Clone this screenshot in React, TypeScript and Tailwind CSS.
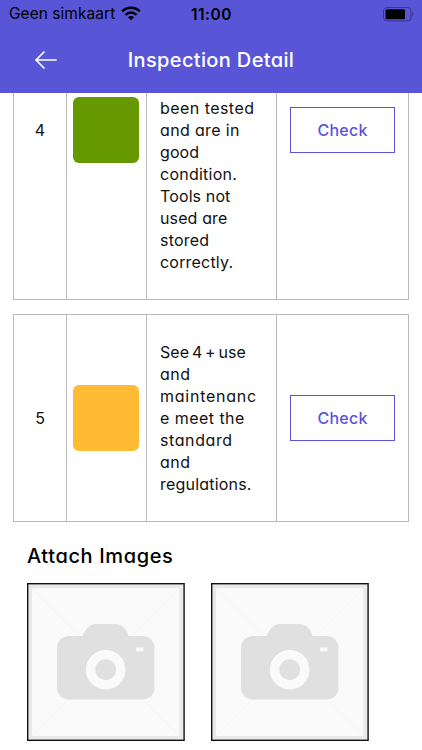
import React from 'react';

interface Line {
  text: string;
  className: string;
}

interface InspectionRowProps {
  score: number;
  swatch: string;
  lines: Line[];
  className: string;
  cellClass: string;
  textClass: string;
}

const goodLines: Line[] = [
  { text: 'been tested', className: 'tracking-[0.45px]' },
  { text: 'and are in', className: 'tracking-[0.35px]' },
  { text: 'good', className: 'tracking-[0.1px]' },
  { text: 'condition.', className: 'tracking-[0.25px]' },
  { text: 'Tools not', className: 'tracking-[0.12px]' },
  { text: 'used are', className: 'tracking-[0.12px]' },
  { text: 'stored', className: 'tracking-[0.2px]' },
  { text: 'correctly.', className: 'tracking-[0.2px]' },
];

const standardLines: Line[] = [
  { text: 'See 4 + use', className: 'tracking-[0.1px] [word-spacing:-1.9px]' },
  { text: 'and', className: 'tracking-[0.45px]' },
  { text: 'maintenanc', className: 'tracking-[0.75px]' },
  { text: 'e meet the', className: 'tracking-[0.45px]' },
  { text: 'standard', className: 'tracking-[0.6px]' },
  { text: 'and', className: 'tracking-[0.45px]' },
  { text: 'regulations.', className: 'tracking-[0.2px]' },
];

function StatusBar() {
  return (
    <div className="flex h-7 items-center justify-between pl-[9px] pr-[8px] text-black [font-feature-settings:normal]">
      <div className="flex w-[150px] items-center gap-[6px]">
        <span className="whitespace-nowrap text-[15.5px] leading-7 tracking-[0.04px]">Geen simkaart</span>
        <svg width="20" height="15" viewBox="0 0 20 15" fill="none" className="mt-[-1px] shrink-0">
          <path d="M1.2 5.4C6.2.5 13.8.5 18.8 5.4" stroke="currentColor" strokeWidth="2.7" />
          <path d="M4.5 8.8C7.7 5.800 12.3 5.800 15.5 8.8" stroke="currentColor" strokeWidth="2.5" />
          <path d="M10 14.3 6.9 11.2C8.7 9.6 11.3 9.6 13.1 11.2Z" fill="currentColor" />
        </svg>
      </div>
      <span className="mt-[1px] text-[15.5px] font-semibold leading-7 tracking-[0.5px]">11:00</span>
      <div className="flex w-[150px] justify-end">
        <svg width="32" height="16" viewBox="0 0 32 16" fill="none" className="mt-[-1px]">
          <rect x="1.500" y="1.500" width="27.500" height="13.500" rx="3.500" stroke="#36348c" />
          <rect x="3.500" y="3.300" width="19.500" height="9.900" rx="1.500" fill="#000" />
          <path d="M30.3 6v4.600c1.4-.6 1.4-4 0-4.600Z" fill="#36348c" />
        </svg>
      </div>
    </div>
  );
}

function Header() {
  return (
    <header className="h-[92.5px] shrink-0 bg-[#5856d6]">
      <StatusBar />
      <div className="grid h-16 grid-cols-[92px_1fr_92px] items-center">
        <button className="flex justify-center" aria-label="Back">
          <svg width="24" height="20" viewBox="0 0 24 20" fill="none" stroke="#fff" strokeWidth="1.7" strokeLinecap="round" strokeLinejoin="round">
            <path d="M22 10H2M10 2 2 10l8 8" />
          </svg>
        </button>
        <h1 className="whitespace-nowrap text-center text-[20px] font-medium tracking-[0.35px] text-white">Inspection Detail</h1>
      </div>
    </header>
  );
}

function InspectionRow({ score, swatch, lines, className, cellClass, textClass }: InspectionRowProps) {
  return (
    <section className={`mx-[13px] grid w-[396px] grid-cols-[53px_80px_130px_1fr] divide-x divide-[#b9b9b9] border border-[#b9b9b9] ${className}`}>
      <div className={`flex justify-center ${cellClass}`}>
        <span className="flex h-[66px] items-center text-[16px]">{score}</span>
      </div>
      <div className={`flex pl-[6px] ${cellClass}`}>
        <div className={`size-[66px] rounded-[6px] ${swatch}`} />
      </div>
      <div className={`pl-[13px] text-[16px] leading-[22.1px] ${textClass}`}>
        {lines.map((line, i) => (
          <p key={i} className={`whitespace-nowrap ${line.className}`}>{line.text}</p>
        ))}
      </div>
      <div className={`flex pl-[13px] ${cellClass}`}>
        <div className="flex h-[66px] items-center">
          <button className="h-[46px] w-[105px] border border-[#5856d6] text-[16px] font-medium tracking-[0.25px] text-[#5856d6]">Check</button>
        </div>
      </div>
    </section>
  );
}

function ImagePlaceholder() {
  return (
    <div className="size-[158px]">
      <svg viewBox="0 0 158 158" className="block size-full">
        <rect x=".7" y=".7" width="156.400" height="156.600" fill="#e9e9e9" stroke="#111" strokeWidth="1.400" />
        <rect x="5" y="5" width="147.500" height="148" fill="#fafafa" />
        <path d="M5 5 152.500 153M152.500 5 5 153" stroke="#f4f4f4" />
        <path
          d="M42 53h14c1.500-7 7-12 13-12h19c7 0 12 5 13.500 12h14c7 0 12 5 12 12v39.500c0 7-5 12-12 12H42c-7 0-12-5-12-12V65c0-7 5-12 12-12Z"
          fill="#e0e0e0"
        />
        <circle cx="78.700" cy="86.700" r="15.100" fill="#e0e0e0" stroke="#fafafa" strokeWidth="9.300" />
        <rect x="109" y="64.500" width="7.300" height="3.800" fill="#fafafa" />
      </svg>
    </div>
  );
}

export default function App() {
  return (
    <div className="flex h-[750px] w-[422px] flex-col overflow-hidden bg-white font-['Inter','Liberation_Sans',sans-serif] text-[#111] [font-feature-settings:'cv11']">
      <Header />
      <main>
        <InspectionRow
          score={4}
          swatch="bg-[#669900]"
          lines={goodLines}
          className="h-[207.5px] border-t-0"
          cellClass="items-start pt-[4.500px]"
          textClass="pt-[4px]"
        />
        <InspectionRow
          score={5}
          swatch="bg-[#ffbb33]"
          lines={standardLines}
          className="mt-[13.5px] h-[208px]"
          cellClass="items-center"
          textClass="self-stretch pt-[26px]"
        />
        <h2 className="ml-[27px] mt-[19.5px] text-[20px] font-medium leading-[30px] tracking-[0.62px] text-black">Attach Images</h2>
        <div className="ml-[27px] mt-[12px] flex gap-[26px]">
          <ImagePlaceholder />
          <ImagePlaceholder />
        </div>
      </main>
    </div>
  );
}
